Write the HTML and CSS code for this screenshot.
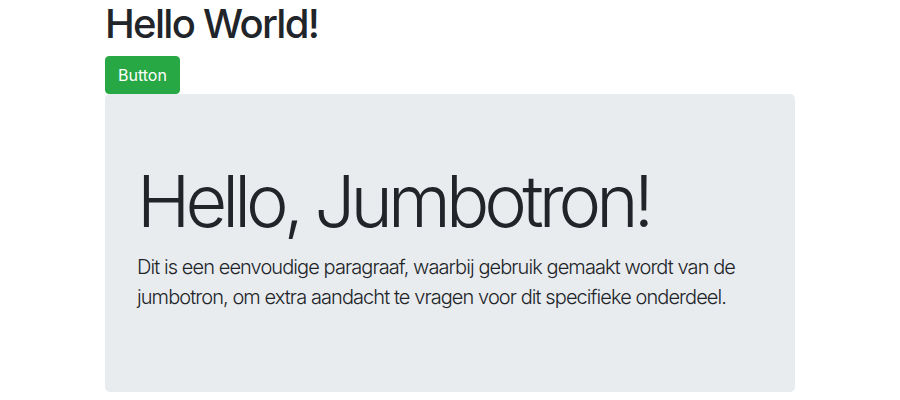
FILE: index.html
```html
<!DOCTYPE html>
<html lang="nl">
<head>
<meta charset="utf-8">
<title>Hello World</title>
<link rel="stylesheet" href="styles.css">
</head>
<body>
<div class="container">
  <h1 class="title">Hello World!</h1>
  <button class="btn btn-success" type="button">Button</button>
  <div class="jumbotron">
    <h1 class="display">Hello, Jumbotron!</h1>
    <p class="lead">Dit is een eenvoudige paragraaf, waarbij gebruik gemaakt wordt van de jumbotron, om extra aandacht te vragen voor dit specifieke onderdeel.</p>
  </div>
</div>
</body>
</html>
```
FILE: styles.css
```css
* { box-sizing: border-box; }
html, body { margin: 0; padding: 0; }
body {
  font-family: Inter, Roboto, "Noto Sans", "Liberation Sans", sans-serif;
  font-size: 16px;
  line-height: 1.5;
  color: #212529;
  background: #fff;
}
.container {
  width: 720px;
  margin: 0 auto;
  padding: 0 15px;
}
.title {
  margin: 0 0 8px;
  font-size: 40px;
  font-weight: 500;
  line-height: 1.2;
  letter-spacing: -1.7px;
}
.btn {
  display: block;
  font-family: inherit;
  font-size: 16px;
  font-weight: 400;
  line-height: 1.5;
  padding: 6px 12px;
  border: 1px solid transparent;
  border-radius: 4px;
  cursor: pointer;
}
.btn-success {
  color: #fff;
  background: #28a745;
  border-color: #28a745;
}
.jumbotron {
  background: #e9ecef;
  border-radius: 4.8px;
  padding: 64px 32px;
  margin-bottom: 32px;
}
.display {
  margin: 0 0 8px;
  font-size: 72px;
  font-weight: 300;
  line-height: 1.2;
  letter-spacing: -4.9px;
}
.lead {
  margin: 0 0 16px;
  font-size: 20px;
  font-weight: 350;
  line-height: 1.5;
  letter-spacing: -0.92px;
}
```
